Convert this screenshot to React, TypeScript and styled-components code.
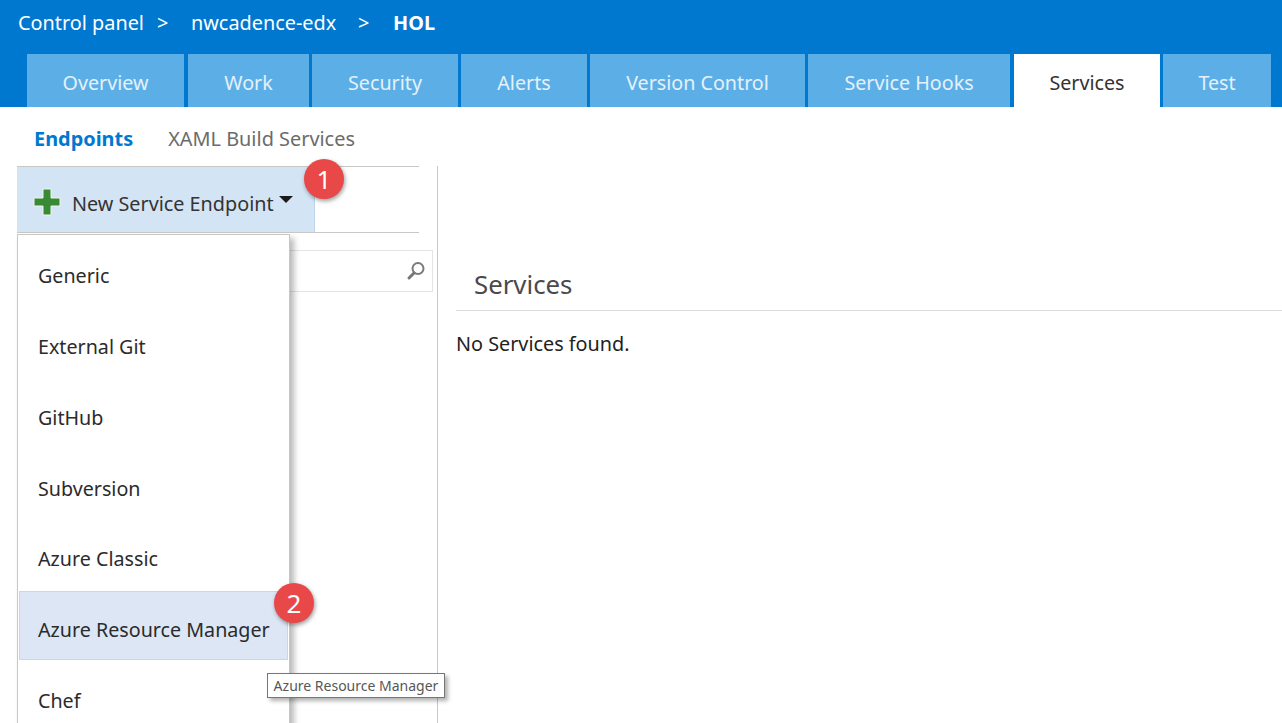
import React from "react";
import styled, { createGlobalStyle } from "styled-components";

const Global = createGlobalStyle`
  html, body { margin: 0; padding: 0; height: 723px; overflow: hidden; background: #fff; }
  body { font-family: "Noto Sans", "Open Sans", "Liberation Sans", sans-serif; }
  * { box-sizing: border-box; }
`;

const Page = styled.div`
  position: relative;
  width: 1282px;
  height: 723px;
  overflow: hidden;
  display: flex;
  flex-direction: column;
`;
const Header = styled.header`
  height: 107px;
  background: #0078cf;
  display: flex;
  flex-direction: column;
  flex: none;
`;
const Crumbs = styled.nav`
  height: 54px;
  padding: 8px 0 0 18px;
  display: flex;
  align-items: flex-start;
  color: #fff;
  font-size: 19.85px;
  line-height: 30px;
`;
const Crumb = styled.span<{ $w: number; $bold?: boolean }>`
  width: ${(p) => p.$w}px;
  font-weight: ${(p) => (p.$bold ? 700 : 400)};
  white-space: nowrap;
`;
const Tabs = styled.div`
  display: flex;
  height: 53px;
  padding-left: 27px;
`;
const Tab = styled.div<{ $w: number; $gap: number; $active?: boolean }>`
  width: ${(p) => p.$w}px;
  margin-right: ${(p) => p.$gap}px;
  background: ${(p) => (p.$active ? "#fff" : "#5cafe6")};
  color: ${(p) => (p.$active ? "#333" : "#e4f1fb")};
  font-size: 19.7px;
  display: flex;
  align-items: center;
  justify-content: center;
  padding-top: 4px;
`;
const SubNav = styled.div`
  height: 59px;
  padding: 17px 0 0 34px;
  display: flex;
  gap: 35px;
  font-size: 19.9px;
  line-height: 30px;
  flex: none;
`;
const SubLink = styled.span<{ $active?: boolean }>`
  color: ${(p) => (p.$active ? "#0078cf" : "#6b6b6b")};
  font-weight: ${(p) => (p.$active ? 700 : 400)};
`;
const Body = styled.div`
  display: flex;
  flex: 1;
  padding-left: 17px;
`;
const Side = styled.aside`
  width: 421px;
  border-right: 1px solid #c8c8c8;
  flex: none;
`;
const Toolbar = styled.div`
  width: 402px;
  height: 67px;
  border-top: 1px solid #c8c8c8;
  border-bottom: 1px solid #c8c8c8;
`;
const NewButton = styled.div`
  width: 298px;
  height: 100%;
  background: #d3e4f5;
  border-right: 1px solid #bcd4ee;
  display: flex;
  align-items: center;
  padding: 3px 0 0 16px;
  font-size: 19.8px;
  color: #333;
`;
const PlusIcon = styled.svg`
  width: 28px;
  height: 28px;
  margin: 2px 11px 0 0;
  flex: none;
`;
const ButtonLabel = styled.span`
  padding-top: 5px;
`;
const Caret = styled.span`
  width: 0;
  height: 0;
  margin: 0 0 4px 5px;
  border-left: 7px solid transparent;
  border-right: 7px solid transparent;
  border-top: 7px solid #1a1a1a;
`;
const SearchBox = styled.div`
  margin: 17px 0 0 0;
  width: 416px;
  height: 42px;
  border: 1px solid #e4e4e4;
  display: flex;
  align-items: center;
  justify-content: flex-end;
  padding-right: 6px;
`;
const Main = styled.main`
  flex: 1;
  padding: 100px 0 0 18px;
`;
const Title = styled.h2`
  margin: 0;
  height: 45px;
  padding: 1px 0 0 18px;
  border-bottom: 1px solid #dcdcdc;
  font-weight: 400;
  font-size: 25.8px;
  line-height: 34px;
  color: #4a4a4a;
`;
const Empty = styled.p`
  margin: 18px 0 0;
  font-size: 19.8px;
  line-height: 30px;
  color: #222;
`;
const Menu = styled.div`
  position: absolute;
  left: 17px;
  top: 234px;
  width: 273px;
  height: 520px;
  background: #fff;
  border: 1px solid #c8c8c8;
  box-shadow: 4px 4px 6px rgba(0, 0, 0, 0.28);
  padding: 2.2px 1px 0;
  display: flex;
  flex-direction: column;
  gap: 1.8px;
`;
const Item = styled.div<{ $active?: boolean }>`
  height: 69px;
  flex: none;
  padding: 8px 0 0 18px;
  display: flex;
  align-items: center;
  font-size: 19.7px;
  color: #2b2b2b;
  background: ${(p) => (p.$active ? "#dce6f5" : "transparent")};
  border: 1px solid ${(p) => (p.$active ? "#c5d6ee" : "transparent")};
`;
const Badge = styled.div<{ $x: number; $y: number }>`
  position: absolute;
  left: ${(p) => p.$x}px;
  top: ${(p) => p.$y}px;
  width: 40px;
  height: 40px;
  border-radius: 50%;
  background: #e94849;
  color: #fff;
  font-size: 26px;
  display: flex;
  align-items: center;
  justify-content: center;
  box-shadow: 1px 2px 4px rgba(0, 0, 0, 0.4);
`;
const Tooltip = styled.div`
  position: absolute;
  left: 267px;
  top: 673px;
  width: 178px;
  height: 25px;
  background: #fff;
  border: 1px solid #767676;
  box-shadow: 3px 3px 4px rgba(0, 0, 0, 0.3);
  color: #575757;
  font-size: 14px;
  display: flex;
  align-items: center;
  justify-content: center;
  white-space: nowrap;
`;

const tabs: [string, number, number, boolean?][] = [
  ["Overview", 157, 4],
  ["Work", 121, 3],
  ["Security", 146, 3],
  ["Alerts", 126, 3],
  ["Version Control", 215, 3],
  ["Service Hooks", 202, 4],
  ["Services", 146, 3, true],
  ["Test", 108, 0],
];
const items = ["Generic", "External Git", "GitHub", "Subversion", "Azure Classic", "Azure Resource Manager", "Chef"];

export default function App() {
  return (
    <Page>
      <Global />
      <Header>
        <Crumbs>
          <Crumb $w={139}>Control panel</Crumb>
          <Crumb $w={34}>&gt;</Crumb>
          <Crumb $w={167}>nwcadence-edx</Crumb>
          <Crumb $w={35}>&gt;</Crumb>
          <Crumb $w={60} $bold>HOL</Crumb>
        </Crumbs>
        <Tabs>
          {tabs.map(([label, w, gap, active]) => (
            <Tab key={label} $w={w} $gap={gap} $active={active}>{label}</Tab>
          ))}
        </Tabs>
      </Header>
      <SubNav>
        <SubLink $active>Endpoints</SubLink>
        <SubLink>XAML Build Services</SubLink>
      </SubNav>
      <Body>
        <Side>
          <Toolbar>
            <NewButton>
              <PlusIcon viewBox="0 0 28 28">
                <path d="M10 1h8v9h9v8h-9v9h-8v-9H1v-8h9z" fill="#388a34" stroke="#eef4ee" strokeWidth="1" />
              </PlusIcon>
              <ButtonLabel>New Service Endpoint</ButtonLabel>
              <Caret />
            </NewButton>
          </Toolbar>
          <SearchBox>
            <svg width="20" height="20" viewBox="0 0 20 20" fill="none">
              <circle cx="12" cy="7.5" r="5.5" stroke="#7a7a7a" strokeWidth="2" />
              <path d="M8 12l-5 5" stroke="#777" strokeWidth="3" strokeLinecap="round" />
            </svg>
          </SearchBox>
        </Side>
        <Main>
          <Title>Services</Title>
          <Empty>No Services found.</Empty>
        </Main>
      </Body>
      <Menu>
        {items.map((t) => (
          <Item key={t} $active={t === "Azure Resource Manager"}>{t}</Item>
        ))}
      </Menu>
      <Badge $x={304} $y={159}>1</Badge>
      <Badge $x={274} $y={583}>2</Badge>
      <Tooltip>Azure Resource Manager</Tooltip>
    </Page>
  );
}
